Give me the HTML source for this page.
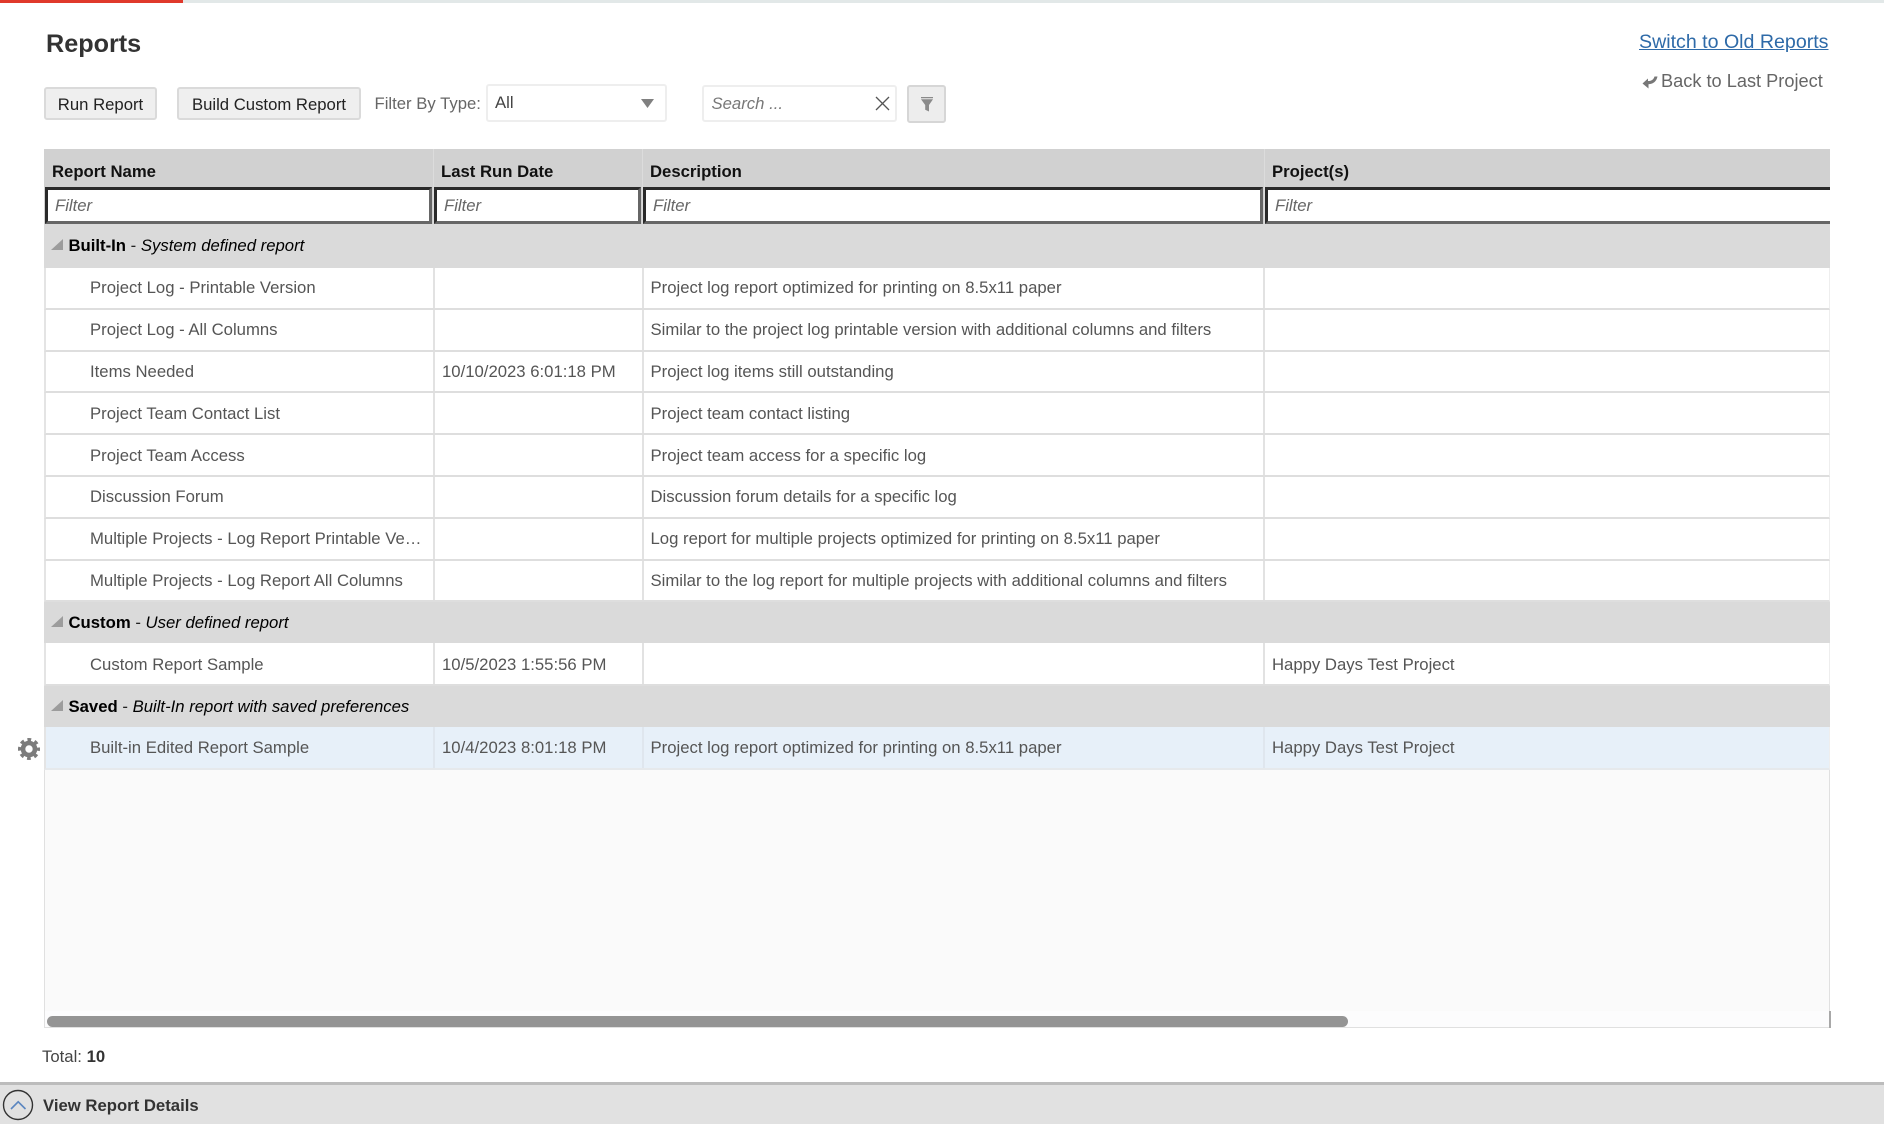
<!DOCTYPE html>
<html lang="en">
<head>
<meta charset="utf-8">
<title>Reports</title>
<style>
html,body{margin:0;padding:0;background:#fff}
body{width:1884px;height:1124px;overflow:hidden;position:relative;font-family:"Liberation Sans",Arial,sans-serif;font-size:16.72px;color:#555}
.a{position:absolute;white-space:nowrap}
.btn{position:absolute;box-sizing:border-box;background:#efefef;border:2px solid #dadada;border-radius:3px;color:#222;text-align:center;top:87px;height:33px;line-height:32px}
.box{position:absolute;box-sizing:border-box;background:#fff;border:2px solid #eeeeee;border-radius:3px}
.h{position:absolute;top:149px;height:38px;line-height:46px;font-weight:bold;color:#111}
.f{position:absolute;box-sizing:border-box;top:187px;height:37px;background:#fff;border-style:solid;border-width:3px;border-color:#2a2a2a #666 #666 #2a2a2a;font-style:italic;color:#666;padding-left:7px;line-height:32px}
.r{position:absolute;left:44px;width:1786px;box-sizing:border-box;background-color:#fff;border-bottom:2px solid #dedede;border-left:2px solid #e4e4e4;border-right:1px solid #eeeeee;
background-image:linear-gradient(#e2e2e2,#e2e2e2),linear-gradient(#e2e2e2,#e2e2e2),linear-gradient(#e2e2e2,#e2e2e2);background-size:2px 100%;background-repeat:no-repeat;background-position:387px 0,596px 0,1217px 0;height:42px;line-height:39px}
.r span{position:absolute;white-space:nowrap}
.c1{left:44px}.c2{left:396px}.c3{left:604.5px}.c4{left:1226px}
.sel{background-color:#e7f0f9;border-bottom-color:#e6e9ec;background-image:linear-gradient(#dfe6ee,#dfe6ee),linear-gradient(#dfe6ee,#dfe6ee),linear-gradient(#dfe6ee,#dfe6ee)}
.g{position:absolute;left:44px;width:1786px;height:42px;background:#dadada;line-height:43px;color:#000}
.g b{position:absolute;left:24.5px;white-space:nowrap;font-weight:bold}
.g em{font-weight:normal}
.g i.n{font-style:normal;font-weight:normal;color:#222}
.g svg{position:absolute;left:7px;top:15px}
</style>
</head>
<body>
<div class="a" style="left:0;top:0;width:1884px;height:3px;background:#e2e8e8"></div>
<div class="a" style="left:0;top:0;width:183px;height:3px;background:#e0392b"></div>

<div class="a" style="left:46px;top:30px;font-size:25.2px;font-weight:bold;color:#333;line-height:28px">Reports</div>

<a class="a" style="left:1639px;top:31px;font-size:19.6px;line-height:22px;color:#2e6aa8;text-decoration:underline">Switch to Old Reports</a>
<svg class="a" style="left:1642px;top:75px" width="16" height="14" viewBox="0 0 16 14"><path d="M0.5 8.5 L6 3.5 L6 6 C9 6 11.5 5 12.5 1.5 L15.5 1.5 C14.5 6.5 11 9 6.5 9.3 L6.5 13.5 Z" fill="#777"/></svg>
<div class="a" style="left:1661px;top:70px;font-size:18.2px;line-height:22px;color:#666">Back to Last Project</div>

<div class="btn" style="left:44px;width:113px">Run Report</div>
<div class="btn" style="left:177px;width:184px">Build Custom Report</div>
<div class="a" style="left:374.5px;top:93px;line-height:22px;color:#666">Filter By Type:</div>
<div class="box" style="left:486px;top:84px;width:181px;height:38px"></div>
<div class="a" style="left:495px;top:92px;line-height:22px;color:#444">All</div>
<svg class="a" style="left:640px;top:98px" width="15" height="11" viewBox="0 0 15 11"><path d="M1 1 H14 L7.5 10 Z" fill="#808080"/></svg>

<div class="box" style="left:702px;top:85px;width:195px;height:37px"></div>
<div class="a" style="left:711.5px;top:93px;line-height:22px;font-style:italic;color:#777">Search ...</div>
<svg class="a" style="left:875px;top:96px" width="15" height="15" viewBox="0 0 15 15"><path d="M1 1 L14 14 M14 1 L1 14" stroke="#555" stroke-width="1.3" fill="none"/></svg>
<div class="a" style="left:907px;top:85px;width:39px;height:38px;box-sizing:border-box;background:#ededed;border:2px solid #d6d6d6;border-radius:3px"></div>
<svg class="a" style="left:921px;top:97px" width="12" height="15" viewBox="0 0 12 15"><path d="M0 0 H12 V1.2 H0 Z M0 2.2 H12 L8 8 V14.5 L4.2 12.8 V8 Z" fill="#8a8a8a"/></svg>

<!-- table frame -->
<div class="a" style="left:44px;top:149px;width:1786px;height:879px;box-sizing:border-box;background:#fafafa;border:1px solid #e0e0e0;border-top:0"></div>
<div class="a" style="left:45px;top:1011px;width:1784px;height:16px;background:#fcfcfd"></div>
<div class="a" style="left:1829px;top:1011px;width:2px;height:17px;background:#a8a8a8"></div>

<!-- header -->
<div class="a" style="left:44px;top:149px;width:1786px;height:75px;background:#d1d1d1"></div>
<div class="a" style="left:433px;top:149px;width:1px;height:75px;background:#dcdcdc"></div>
<div class="a" style="left:642px;top:149px;width:1px;height:75px;background:#dcdcdc"></div>
<div class="a" style="left:1264px;top:149px;width:1px;height:75px;background:#dcdcdc"></div>
<div class="h" style="left:52px">Report Name</div>
<div class="h" style="left:441px">Last Run Date</div>
<div class="h" style="left:650px">Description</div>
<div class="h" style="left:1272px">Project(s)</div>

<div class="f" style="left:45px;width:387px">Filter</div>
<div class="f" style="left:434px;width:207px">Filter</div>
<div class="f" style="left:643px;width:620px">Filter</div>
<div class="f" style="left:1265px;width:565px;border-right:0">Filter</div>

<!-- rows -->
<div class="g" style="top:224px;height:44px"><svg width="12" height="12" viewBox="0 0 12 12"><path d="M12 0 V11 H0 Z" fill="#9c9c9c"/></svg><b>Built-In <i class="n">-</i> <em>System defined report</em></b></div>
<div class="r" style="top:268px"><span class="c1">Project Log - Printable Version</span><span class="c3">Project log report optimized for printing on 8.5x11 paper</span></div>
<div class="r" style="top:310px"><span class="c1">Project Log - All Columns</span><span class="c3">Similar to the project log printable version with additional columns and filters</span></div>
<div class="r" style="top:352px;height:41px"><span class="c1">Items Needed</span><span class="c2">10/10/2023 6:01:18 PM</span><span class="c3">Project log items still outstanding</span></div>
<div class="r" style="top:393px;line-height:41px"><span class="c1">Project Team Contact List</span><span class="c3">Project team contact listing</span></div>
<div class="r" style="top:435px;line-height:41px"><span class="c1">Project Team Access</span><span class="c3">Project team access for a specific log</span></div>
<div class="r" style="top:477px"><span class="c1">Discussion Forum</span><span class="c3">Discussion forum details for a specific log</span></div>
<div class="r" style="top:519px"><span class="c1">Multiple Projects - Log Report Printable Ve…</span><span class="c3">Log report for multiple projects optimized for printing on 8.5x11 paper</span></div>
<div class="r" style="top:561px;height:41px"><span class="c1">Multiple Projects - Log Report All Columns</span><span class="c3">Similar to the log report for multiple projects with additional columns and filters</span></div>
<div class="g" style="top:602px;height:41px;line-height:41px"><svg style="top:14px" width="12" height="12" viewBox="0 0 12 12"><path d="M12 0 V11 H0 Z" fill="#9c9c9c"/></svg><b>Custom <i class="n">-</i> <em>User defined report</em></b></div>
<div class="r" style="top:643px;height:43px;line-height:43px"><span class="c1">Custom Report Sample</span><span class="c2">10/5/2023 1:55:56 PM</span><span class="c4">Happy Days Test Project</span></div>
<div class="g" style="top:686px;height:41px;line-height:41px"><svg style="top:14px" width="12" height="12" viewBox="0 0 12 12"><path d="M12 0 V11 H0 Z" fill="#9c9c9c"/></svg><b>Saved <i class="n">-</i> <em>Built-In report with saved preferences</em></b></div>
<div class="r sel" style="top:727px;height:43px;line-height:41px"><span class="c1">Built-in Edited Report Sample</span><span class="c2">10/4/2023 8:01:18 PM</span><span class="c3">Project log report optimized for printing on 8.5x11 paper</span><span class="c4">Happy Days Test Project</span></div>

<!-- gear -->
<svg class="a" style="left:18px;top:738px" width="22" height="22" viewBox="0 0 22 22"><circle cx="11" cy="11" r="6" fill="none" stroke="#7c7c7c" stroke-width="4.6"/><circle cx="11" cy="11" r="9" fill="none" stroke="#7c7c7c" stroke-width="4" stroke-dasharray="3.6 3.47" stroke-dashoffset="1.8"/></svg>

<!-- scrollbar -->
<div class="a" style="left:47px;top:1016px;width:1301px;height:11px;background:#949494;border-radius:6px"></div>

<div class="a" style="left:42px;top:1046px;line-height:22px;color:#444">Total: <b style="color:#333">10</b></div>

<!-- footer -->
<div class="a" style="left:0;top:1082px;width:1884px;height:42px;box-sizing:border-box;background:#e1e1e1;border-top:3px solid #bcbcbc"></div>
<svg class="a" style="left:2px;top:1089px" width="32" height="32" viewBox="0 0 32 32"><circle cx="16" cy="16" r="14.5" fill="none" stroke="#333" stroke-width="1.4"/><path d="M9 20 L16.2 12.8 L23.5 20" fill="none" stroke="#5b86c0" stroke-width="1.6"/></svg>
<div class="a" style="left:43px;top:1095px;line-height:22px;font-weight:bold;color:#333">View Report Details</div>
</body>
</html>
